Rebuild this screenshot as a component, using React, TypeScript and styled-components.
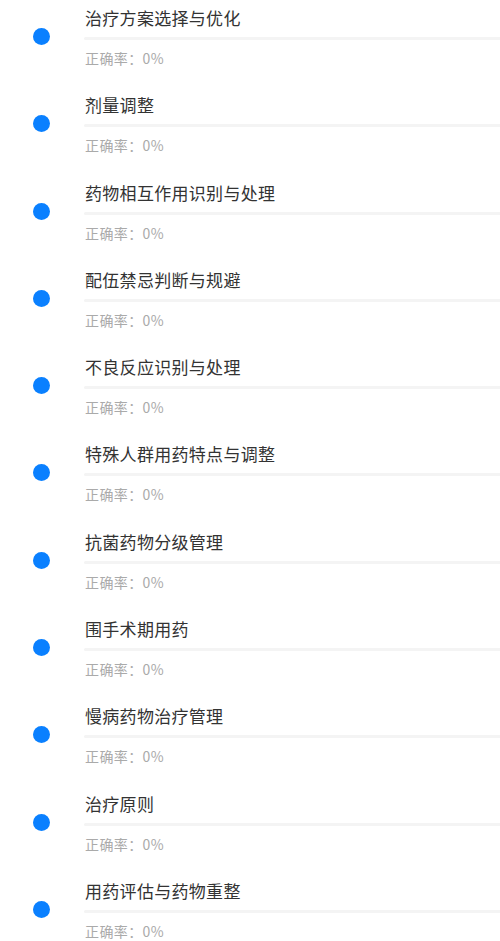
import React, { FC } from "react";
import styled, { createGlobalStyle } from "styled-components";

const GlobalStyle = createGlobalStyle`
    html, body {
        margin: 0;
        padding: 0;
        background: #ffffff;
        font-family: "Noto Sans CJK SC", "Noto Sans", sans-serif;
    }
`;

const topics = [
    "治疗方案选择与优化",
    "剂量调整",
    "药物相互作用识别与处理",
    "配伍禁忌判断与规避",
    "不良反应识别与处理",
    "特殊人群用药特点与调整",
    "抗菌药物分级管理",
    "围手术期用药",
    "慢病药物治疗管理",
    "治疗原则",
    "用药评估与药物重整",
];

interface ItemProps {
    title: string;
    rate: number;
}

const TopicItem: FC<ItemProps> = ({ title, rate }) => (
    <Item>
        <Dot />
        <Content>
            <Title>{title}</Title>
            <Track>
                <Fill style={{ width: `${rate}%` }} />
            </Track>
            <Rate>正确率：{rate}%</Rate>
        </Content>
    </Item>
);

export default function App() {
    return (
        <>
            <GlobalStyle />
            <List>
                {topics.map((t) => (
                    <TopicItem key={t} title={t} rate={0} />
                ))}
            </List>
        </>
    );
}

const List = styled.div`
    width: 500px;
    display: flex;
    flex-direction: column;
`;

const Item = styled.div`
    height: 87.3px;
    display: flex;
    flex-direction: row;
    align-items: flex-start;
    box-sizing: border-box;
`;

const Dot = styled.div`
    width: 17px;
    height: 17px;
    border-radius: 50%;
    background: #0a80ff;
    margin: 28px 34px 0 33px;
    flex-shrink: 0;
`;

const Content = styled.div`
    flex: 1;
    padding-top: 6px;
    display: flex;
    flex-direction: column;
    min-width: 0;
`;

const Title = styled.div`
    font-size: 17px;
    line-height: 24px;
    letter-spacing: 0.3px;
    color: #333333;
    padding-left: 1px;
    white-space: nowrap;
`;

const Track = styled.div`
    margin-top: 7px;
    height: 3px;
    border-radius: 2px 0 0 2px;
    background: #f4f4f4;
    overflow: hidden;
`;

const Fill = styled.div`
    height: 100%;
    background: #0a80ff;
`;

const Rate = styled.div`
    margin-top: 8px;
    font-size: 14px;
    line-height: 20px;
    letter-spacing: 0.4px;
    color: #aaaaaa;
    padding-left: 1px;
`;
